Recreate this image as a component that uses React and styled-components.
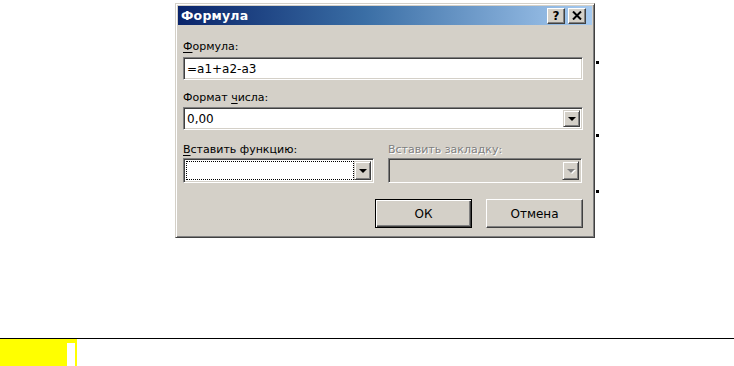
import React from "react";
import styled, { createGlobalStyle, css } from "styled-components";

const GlobalStyle = createGlobalStyle`
  html, body { margin: 0; padding: 0; background: #ffffff; }
  body { width: 734px; height: 366px; overflow: hidden; }
  * { box-sizing: border-box; }
`;

const Page = styled.div`
  position: relative;
  width: 734px;
  height: 366px;
  display: flex;
  flex-direction: column;
  font-family: "DejaVu Sans", Tahoma, sans-serif;
  font-size: 11px;
  color: #000;
`;

const Window = styled.div`
  margin: 3px 0 0 175px;
  width: 420px;
  height: 235px;
  background: #d4d0c8;
  border: 1px solid;
  border-color: #d4d0c8 #404040 #404040 #d4d0c8;
  box-shadow: inset 1px 1px #ffffff, inset -1px -1px #808080;
  padding: 2px;
  display: flex;
  flex-direction: column;
`;

const TitleBar = styled.div`
  height: 19px;
  display: flex;
  align-items: center;
  padding: 0 6px 0 3px;
  background: linear-gradient(to right, #0a246a 0%, #3a6ea5 45%, #a6caf0 100%);
`;

const Title = styled.div`
  flex: 1;
  color: #fff;
  font-weight: bold;
  font-size: 12.5px;
  letter-spacing: 0.2px;
`;

const CaptionButton = styled.div`
  width: 18px;
  height: 16px;
  margin-left: ${(p) => p.$gap || 0}px;
  background: #d4d0c8;
  border: 1px solid;
  border-color: #ffffff #404040 #404040 #ffffff;
  box-shadow: inset -1px -1px #808080;
  display: flex;
  align-items: center;
  justify-content: center;
  font-weight: bold;
  font-size: 12px;
  line-height: 1;
`;

const Body = styled.div`
  flex: 1;
  display: flex;
  flex-direction: column;
  padding: 15px 9px 0 5px;
`;

const Label = styled.div`
  height: 13px;
  line-height: 13px;
  margin-top: ${(p) => p.$top || 0}px;
  white-space: nowrap;
  ${(p) =>
    p.$disabled &&
    css`
      color: #808080;
      text-shadow: 1px 1px 0 #ffffff;
    `}
`;

const Key = styled.span`
  text-decoration: underline;
  text-underline-offset: 2px;
`;

const Sunken = styled.div`
  position: relative;
  height: ${(p) => p.$h || 23}px;
  margin-top: ${(p) => p.$top || 0}px;
  background: ${(p) => (p.$disabled ? "#d4d0c8" : "#ffffff")};
  border: 1px solid;
  border-color: #808080 #ffffff #ffffff #808080;
  box-shadow: inset 1px 1px #404040, inset -1px -1px #d4d0c8;
  padding: 2px;
  display: flex;
  align-items: stretch;
`;

const FieldText = styled.div`
  flex: 1;
  display: flex;
  align-items: center;
  padding-left: 1px;
  font-size: 12px;
  white-space: nowrap;
  ${(p) =>
    p.$focus &&
    css`
      border: 1px dotted #000;
    `}
`;

const DropButton = styled.div`
  width: 17px;
  background: #d4d0c8;
  border: 1px solid;
  border-color: #d4d0c8 #404040 #404040 #d4d0c8;
  box-shadow: inset 1px 1px #ffffff, inset -1px -1px #808080;
  display: flex;
  align-items: center;
  justify-content: center;
`;

const Arrow = styled.div`
  width: 0;
  height: 0;
  border-left: 4px solid transparent;
  border-right: 4px solid transparent;
  border-top: 4px solid ${(p) => (p.$disabled ? "#808080" : "#000")};
  ${(p) => p.$disabled && css`filter: drop-shadow(1px 1px 0 #fff);`}
`;

const Columns = styled.div`
  display: grid;
  grid-template-columns: 191px 194px;
  column-gap: 14px;
  margin-top: 13px;
`;

const Column = styled.div`
  display: flex;
  flex-direction: column;
`;

const Buttons = styled.div`
  display: flex;
  justify-content: flex-end;
  gap: 14px;
  margin-top: 16px;
  padding-right: 0;
`;

const PushButton = styled.div`
  width: 97px;
  height: 29px;
  background: #d4d0c8;
  display: flex;
  align-items: center;
  justify-content: center;
  font-size: 12px;
  border: 1px solid;
  ${(p) =>
    p.$default
      ? css`
          border-color: #000;
          box-shadow: inset 1px 1px #ffffff, inset -1px -1px #404040, inset -2px -2px #808080;
        `
      : css`
          border-color: #ffffff #404040 #404040 #ffffff;
          box-shadow: inset -1px -1px #808080;
        `}
`;

const Spacer = styled.div`
  flex: 1;
`;

const BottomBar = styled.div`
  height: 28px;
  border-top: 1px solid #000;
  display: flex;
`;

const Highlight = styled.div`
  width: 77px;
  background: #ffff00;
  display: flex;
  justify-content: flex-end;
  align-items: flex-end;
  padding-right: 2px;
`;

const Caret = styled.div`
  width: 8px;
  height: 23px;
  background: #ffffff;
`;

const Tick = styled.div`
  position: absolute;
  left: 596px;
  width: 3px;
  height: 3px;
  background: #000;
`;

export default function App() {
  return (
    <>
      <GlobalStyle />
      <Page>
        <Window>
          <TitleBar>
            <Title>Формула</Title>
            <CaptionButton>?</CaptionButton>
            <CaptionButton $gap={3}>
              <svg width="10" height="9" viewBox="0 0 10 9">
                <path d="M1 0.5 L9 8.5 M9 0.5 L1 8.5" stroke="#000" strokeWidth="2" />
              </svg>
            </CaptionButton>
          </TitleBar>
          <Body>
            <Label>
              <Key>Ф</Key>ормула:
            </Label>
            <Sunken $top={4}>
              <FieldText>=a1+a2-a3</FieldText>
            </Sunken>
            <Label $top={11}>
              Формат <Key>ч</Key>исла:
            </Label>
            <Sunken $top={3}>
              <FieldText>0,00</FieldText>
              <DropButton>
                <Arrow />
              </DropButton>
            </Sunken>
            <Columns>
              <Column>
                <Label>
                  <Key>В</Key>ставить функцию:
                </Label>
                <Sunken $top={2} $h={25}>
                  <FieldText $focus />
                  <DropButton>
                    <Arrow />
                  </DropButton>
                </Sunken>
              </Column>
              <Column>
                <Label $disabled>Вставить закладку:</Label>
                <Sunken $top={2} $h={25} $disabled>
                  <FieldText />
                  <DropButton>
                    <Arrow $disabled />
                  </DropButton>
                </Sunken>
              </Column>
            </Columns>
            <Buttons>
              <PushButton $default>ОК</PushButton>
              <PushButton>Отмена</PushButton>
            </Buttons>
          </Body>
        </Window>
        <Spacer />
        <BottomBar>
          <Highlight>
            <Caret />
          </Highlight>
        </BottomBar>
        <Tick style={{ top: 61 }} />
        <Tick style={{ top: 134 }} />
        <Tick style={{ top: 190 }} />
      </Page>
    </>
  );
}
